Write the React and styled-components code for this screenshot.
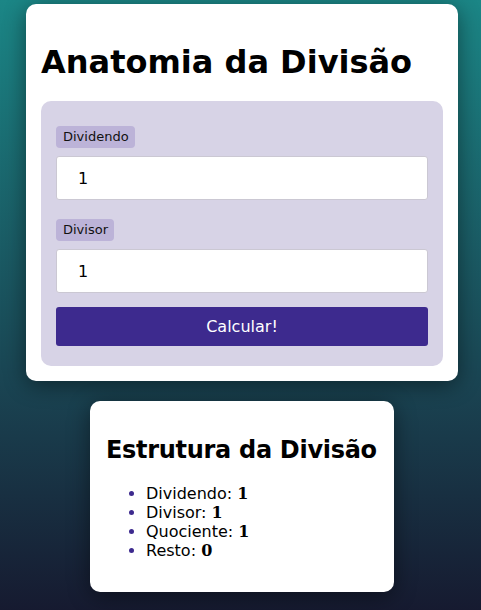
import React, { useState } from "react";
import styled, { createGlobalStyle } from "styled-components";

const GlobalStyle = createGlobalStyle`
  html, body {
    margin: 0;
    padding: 0;
  }
  body {
    min-height: 100vh;
    background: linear-gradient(180deg, #1b8686 0%, #1a4553 62%, #161a30 100%);
    font-family: "DejaVu Sans", Verdana, sans-serif;
    color: #000;
  }
`;

const Page = styled.main`
  display: flex;
  flex-direction: column;
  align-items: center;
  gap: 20px;
  padding: 4px 0 19px 3px;
  box-sizing: border-box;
`;

const Card = styled.section`
  background: #fff;
  border-radius: 10px;
  box-shadow: 0 4px 22px rgba(0, 0, 0, 0.45);
  box-sizing: border-box;
  width: ${(p) => p.$width}px;
  padding: ${(p) => p.$padding};
`;

const Title = styled.h1`
  font-family: "DejaVu Sans", Verdana, sans-serif;
  font-weight: bold;
  font-size: 32px;
  margin: 23px 0 19.5px;
  line-height: normal;
`;

const SubTitle = styled.h2`
  font-family: "DejaVu Sans", Verdana, sans-serif;
  font-weight: bold;
  font-size: 24px;
  letter-spacing: -0.3px;
  white-space: nowrap;
  margin: 19.92px 0;
  line-height: normal;
`;

const Panel = styled.form`
  background: #d7d3e6;
  border-radius: 10px;
  padding: 25px 15px 20px;
  display: flex;
  flex-direction: column;
`;

const Field = styled.div`
  display: flex;
  flex-direction: column;
  align-items: flex-start;
  gap: 8px;
  margin-bottom: ${(p) => p.$gap}px;
`;

const Label = styled.label`
  background: #bcb3d8;
  border-radius: 4px;
  font-size: 13px;
  line-height: 16px;
  padding: 3px 6px 3px 7px;
  color: #111;
`;

const Input = styled.input`
  width: 100%;
  box-sizing: border-box;
  height: 44px;
  border: 1px solid #cbc8d3;
  border-radius: 3px;
  background: #fff;
  padding: 2px 21px 0;
  font-family: "DejaVu Sans", Verdana, sans-serif;
  font-size: 16px;
  color: #000;
  outline: none;
`;

const Button = styled.button`
  height: 39px;
  border: none;
  border-radius: 3px;
  background: #3d2a8e;
  color: #fff;
  font-family: "DejaVu Sans", Verdana, sans-serif;
  font-size: 16px;
  cursor: pointer;
`;

const List = styled.ul`
  margin: 16px 0;
  padding-left: 40px;
  font-size: 16px;
  line-height: normal;

  li::marker {
    color: #3d2a8e;
  }
`;

const Value = styled.strong`
  font-family: "DejaVu Serif", "Liberation Serif", serif;
  font-weight: bold;
`;

export default function App() {
  const [dividendo, setDividendo] = useState("1");
  const [divisor, setDivisor] = useState("1");
  const [res, setRes] = useState({ a: 1, b: 1, q: 1, r: 0 });

  const calc = (e) => {
    e.preventDefault();
    const a = parseInt(dividendo, 10) || 0;
    const b = parseInt(divisor, 10) || 1;
    setRes({ a, b, q: Math.floor(a / b), r: a % b });
  };

  return (
    <>
      <GlobalStyle />
      <Page>
        <Card $width={432} $padding="16px 15px 15px">
          <Title>Anatomia da Divisão</Title>
          <Panel onSubmit={calc}>
            <Field $gap={19}>
              <Label htmlFor="dividendo">Dividendo</Label>
              <Input
                id="dividendo"
                value={dividendo}
                onChange={(e) => setDividendo(e.target.value)}
              />
            </Field>
            <Field $gap={14}>
              <Label htmlFor="divisor">Divisor</Label>
              <Input
                id="divisor"
                value={divisor}
                onChange={(e) => setDivisor(e.target.value)}
              />
            </Field>
            <Button type="submit">Calcular!</Button>
          </Panel>
        </Card>
        <Card $width={304} $padding="16px">
          <SubTitle>Estrutura da Divisão</SubTitle>
          <List>
            <li>
              Dividendo: <Value>{res.a}</Value>
            </li>
            <li>
              Divisor: <Value>{res.b}</Value>
            </li>
            <li>
              Quociente: <Value>{res.q}</Value>
            </li>
            <li>
              Resto: <Value>{res.r}</Value>
            </li>
          </List>
        </Card>
      </Page>
    </>
  );
}
